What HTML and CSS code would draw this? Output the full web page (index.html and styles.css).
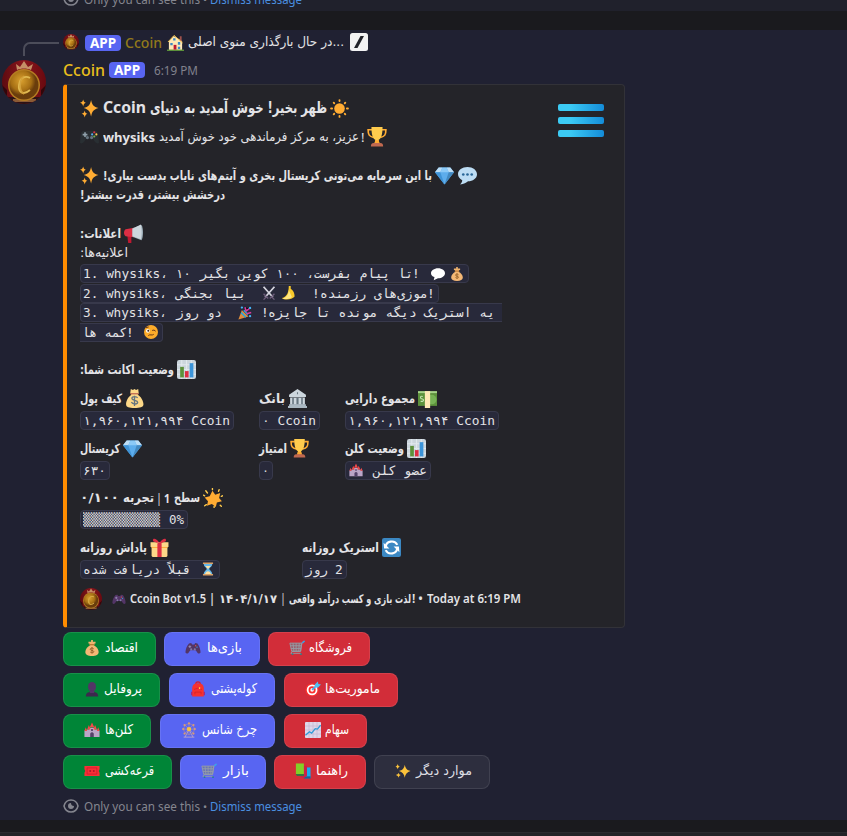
FILE: index.html
```html
<!DOCTYPE html>
<html lang="fa" dir="ltr">
<head>
<meta charset="utf-8">
<title>Ccoin</title>
<link rel="stylesheet" href="styles.css">
</head>
<body>
<svg class="defs" width="0" height="0">
<defs>
<linearGradient id="bar" x1="0" y1="0" x2="1" y2="0"><stop offset=".25" stop-color="#3ccbf4"/><stop offset="1" stop-color="#148cd8"/></linearGradient>
<radialGradient id="gold" cx=".4" cy=".35"><stop offset="0" stop-color="#d9a02e"/><stop offset=".7" stop-color="#a66f14"/><stop offset="1" stop-color="#6a3d0c"/></radialGradient>
<linearGradient id="red" x1="0" y1="0" x2="1" y2="0"><stop offset="0" stop-color="#5d0b10"/><stop offset=".5" stop-color="#8a161d"/><stop offset="1" stop-color="#69090f"/></linearGradient>
<clipPath id="round"><circle cx="22" cy="22" r="22"/></clipPath>
</defs>
<symbol id="coin" viewBox="0 0 44 44"><g clip-path="url(#round)"><path fill="url(#red)" d="M0 0h44v44H0z"/><path fill="#30070b" d="M0 25l5 5v8H0zM44 25l-5 5v8h5z"/><path fill="#2a1215" d="M4 37h36v7H4z"/><path fill="#8a5a35" d="M11 39h23v3H11z"/><circle cx="22" cy="25" r="16" fill="#b57d22"/><circle cx="22" cy="25" r="14.500" fill="url(#gold)"/><path d="M28 18c-5-3-10 0-11 7s4 11 11 5" fill="none" stroke="#e0b850" stroke-width="1.800"/><path d="M22 16c-5 4-5 15 0 18" fill="none" stroke="#d3a03a" stroke-width="1.500"/><path fill="#c58f66" d="M15 10l-1-6 4 3 4-6 4 6 5-3-2 6c-4-2-10-2-14 0z"/></g></symbol>
<symbol id="sparkles" viewBox="0 0 36 36"><path fill="#FFAC33" d="M35 17c-9-2-12-5-14-15-2 10-5 13-14 15 9 3 12 6 14 16 2-10 5-13 14-16zM14 28c-4-1-4-2-5-6-1 4-2 5-6 6 4 1 5 3 6 7 1-4 2-6 5-7zM11 7C8 6 7 5 6 1 5 5 4 6 0 7c4 1 5 3 6 7 1-4 2-6 5-7z"/></symbol>
<symbol id="sparkles2" viewBox="0 0 36 36"><path fill="#fcc33b" d="M35 18c-8-2-11-5-13-14-2 9-5 12-13 14 8 3 11 6 13 15 2-9 5-12 13-15zM13 27c-4-1-4-2-5-5-1 3-2 4-6 5 4 1 5 3 6 6 1-3 2-5 5-6zM11 8C8 7 7 6 6 2 5 6 4 7 1 8c3 1 4 3 5 6 1-3 2-5 5-6z"/></symbol>
<symbol id="sun" viewBox="0 0 36 36"><circle cx="18" cy="18" r="10" fill="#FFAC33"/><path stroke="#FFAC33" stroke-width="3.500" stroke-linecap="round" d="M18 2v2M18 32v2M2 18h2M32 18h2M7 7l1 1M28 28l1 1M7 29l1-1M28 8l1-1"/></symbol>
<symbol id="shine" viewBox="0 0 36 36"><path fill="#FFAC33" d="M17 5l5 7 9-3-2 9 5 6-9 2-2 8-7-5-9 3 2-8-6-7 9-2z"/><path stroke="#FFCC4D" stroke-width="2.500" stroke-linecap="round" d="M17 1v2M20 33v2M1 13l2 1M33 15l2-1M5 5l3 4M29 3l-1 3M3 32l3-2M31 31l2 2"/></symbol>
<symbol id="pad" viewBox="0 0 36 36"><path fill="#292F33" d="M10 7h16c7 0 8 3 9 9l1 14c-2 2-5 1-7-1l-4-6H11l-4 6c-2 2-5 3-7 1l1-14c1-6 2-9 9-9z"/><path fill="#8fa0aa" d="M8 10h3v3h3v3h-3v3H8v-3H5v-3h3z"/><circle cx="27" cy="10" r="2" fill="#dd2e44"/><circle cx="31" cy="14" r="2" fill="#ffcc4d"/><circle cx="23" cy="14" r="2" fill="#55acee"/><circle cx="27" cy="18" r="2" fill="#77b255"/><circle cx="14" cy="20" r="3" fill="#66757f"/><circle cx="22" cy="20" r="3" fill="#66757f"/></symbol>
<symbol id="gamepad" viewBox="0 0 36 36"><path fill="#533566" d="M9 8l5-1 2 3h5l2-3 5 1c4 5 7 14 7 20-2 4-6 3-8-1l-3-4H12l-3 4c-2 4-6 5-8 1 0-6 3-15 8-20z"/><path stroke="#9b93bd" stroke-width="2" d="M8 15h6M11 12v6"/><circle cx="24" cy="13" r="1.500" fill="#e9554b"/><circle cx="27" cy="16" r="1.500" fill="#38b1ea"/><circle cx="14" cy="21" r="2.500" fill="#8178a4"/><circle cx="22" cy="21" r="2.500" fill="#8178a4"/></symbol>
<symbol id="trophy" viewBox="0 0 36 36"><path fill="none" stroke="#FFAC33" stroke-width="3" d="M9 5H2c0 9 2 12 10 14M27 5h7c0 9-2 12-10 14"/><path fill="#FFCC4D" d="M8 0h20c0 12-2 21-7 23l1 6h-8l1-6C10 21 8 12 8 0z"/><path fill="#FFAC33" d="M15 24h6l2 6H13z"/><path fill="#C1694F" d="M12 29h12c4 0 5 3 5 6H7c0-3 1-6 5-6z"/></symbol>
<symbol id="diamond" viewBox="0 0 36 36"><path fill="#5DADEC" d="M7 3h22l7 9-18 23L0 12z"/><path fill="#BDDDF4" d="M7 3h7l-4 9H0zM29 3h-7l4 9h10z"/><path fill="#8CCAF7" d="M14 3h8l4 9H10z"/><path fill="#4289C1" d="M18 35l8-23h10z"/><path fill="#3f93d6" d="M18 35L10 12H0z"/></symbol>
<symbol id="speech" viewBox="0 0 36 36"><path fill="#BDDDF4" d="M18 2c10 0 18 6 18 14 0 7-8 13-17 13-3 3-8 5-15 6 3-3 4-6 4-8-5-3-8-7-8-12C0 8 8 2 18 2z"/><g fill="#2A6797"><circle cx="10" cy="16" r="2.500"/><circle cx="18" cy="16" r="2.500"/><circle cx="26" cy="16" r="2.500"/></g></symbol>
<symbol id="bubble" viewBox="0 0 36 36"><path fill="#fff" d="M18 3c11 0 18 6 18 13s-8 13-18 13l-11 5 2-8C3 24 0 20 0 16 0 9 8 3 18 3z"/></symbol>
<symbol id="mega" viewBox="0 0 36 36"><path fill="#be1931" d="M6 20h8v16H8z"/><path fill="#DD2E44" d="M3 10l16-3v18L3 23c-4-3-4-10 0-13z"/><path fill="#99AAB5" d="M16 8L33 2c4 4 4 24 0 29l-17-7z"/><path fill="#CCD6DD" d="M16 9L32 1c2 8 2 21 0 28l-16-6z"/></symbol>
<symbol id="bag" viewBox="0 0 36 36"><path fill="#FDD888" d="M11 0l4 2 3-2 3 2 4-2 1 8-2 3c6 3 11 12 11 18 0 6-7 7-17 7S2 35 2 29c0-6 4-14 10-18l-2-4z"/><path stroke="#BF6952" stroke-width="2.500" d="M10 9h16"/><path d="M24 17c-3-4-11-3-11 1s11 3 11 7-9 5-12 0M18 13v19" fill="none" stroke="#67757F" stroke-width="2.500"/></symbol>
<symbol id="bag2" viewBox="0 0 36 36"><path fill="#f3b775" d="M12 7h12l-2 5c6 3 11 9 11 15 0 6-6 9-15 9S3 33 3 27c0-6 5-12 11-15z"/><path fill="#c07b35" d="M12 9h12v3H12z"/><path fill="#f0b46e" d="M16 0h4v6h-4zM10 4h16v4H10z"/><path d="M22 20c-3-3-8-2-8 1s8 2 8 5-5 4-8 1M18 16v14" fill="none" stroke="#8d5923" stroke-width="2"/></symbol>
<symbol id="swords" viewBox="0 0 36 36"><path d="M4 2l24 27M32 2L8 29" stroke="#d6d6df" stroke-width="4.500"/><path d="M4 20l12 12M32 20L20 32M4 35l7-7M32 35l-7-7" stroke="#6d5c7a" stroke-width="3.500"/></symbol>
<symbol id="banana" viewBox="0 0 36 36"><path fill="#f9c92b" d="M20 0h5v7c7 4 10 12 10 20-6 8-25 11-33 4 10-2 18-10 18-31z"/><path fill="#ffe682" d="M20 10l8 18c-6 5-16 7-24 4 10-3 16-10 16-22z"/></symbol>
<symbol id="party" viewBox="0 0 36 36"><path fill="#dd8b3b" d="M10 10l17 17L1 35z"/><path stroke="#29a5df" stroke-width="4" d="M8 17l12 12M15 11l10 11"/><path stroke="#d83ba0" stroke-width="4" d="M18 3l3 10 8-6M22 20l12-3"/><g fill="#44b4f5"><circle cx="10" cy="4" r="3"/><circle cx="31" cy="26" r="3"/><circle cx="31" cy="5" r="3"/></g></symbol>
<symbol id="wink" viewBox="0 0 36 36"><circle cx="18" cy="18" r="18" fill="#fbab2a"/><circle cx="10" cy="15" r="5" fill="#fff"/><circle cx="11" cy="15" r="2.500" fill="#442a1c"/><path d="M21 14q5-3 9 2M5 7l7-2M11 27c5-4 9 1 14-3" fill="none" stroke="#633318" stroke-width="2.500"/></symbol>
<symbol id="chart" viewBox="0 0 36 36"><rect width="36" height="36" rx="4" fill="#CCD6DD"/><path d="M0 9h36M0 18h36M0 27h36M9 0v36M18 0v36M27 0v36" stroke="#E1E8ED" stroke-width="2"/><path fill="#5C913B" d="M6 13h7v20H6z"/><path fill="#DD2E44" d="M15 21h7v12h-7z"/><path fill="#3B94D9" d="M24 6h7v27h-7z"/></symbol>
<symbol id="bank" viewBox="0 0 36 36"><path fill="#CCD6DD" d="M18 0l16 11v4H2v-4zM4 16h28v14H4z"/><path fill="#66757F" d="M8 16h3v14H8zM16 16h4v14h-4zM25 16h3v14h-3zM17 6h2v4h-2z"/><path fill="#aab8c2" d="M2 29h32v3H2zM0 32h36v4H0z"/></symbol>
<symbol id="cash" viewBox="0 0 36 36"><path fill="#A6D388" d="M0 4h36v5H0z"/><path fill="#5C913B" d="M0 8h36v24H0z"/><circle cx="26" cy="20" r="9" fill="#77B255"/><path fill="#FFE8B6" d="M13 4h10v32H13z"/><path d="M9 14c-6-2-5 5-1 5s3 6-3 4" fill="none" stroke="#c6e5b3" stroke-width="2"/></symbol>
<symbol id="castle" viewBox="0 0 36 36"><path fill="#bba5c8" d="M1 19h5v-2h6v-4h12v4h6v2h5v15H1z"/><path fill="#f54848" d="M1 20l3-8 3 8zM29 20l3-8 3 8zM7 17l4-10 4 10zM21 17l4-10 4 10zM13 12l5-11 5 11z"/><path fill="#55436b" d="M14 34V26q4-6 8 0v8zM16 16h4v4h-4z"/></symbol>
<symbol id="gift" viewBox="0 0 36 36"><path fill="#FDD888" d="M3 15h30v18q0 3-3 3H6q-3 0-3-3z"/><path fill="#FCAB40" d="M3 15h30v4H3z"/><path fill="#FDD888" d="M1 8h34v9H1z"/><path fill="#DD2E44" d="M14 8h8v28h-8zM17 8C12 0 4-1 6 6l9 4zM19 8c5-8 13-9 11-2l-9 4z"/></symbol>
<symbol id="refresh" viewBox="0 0 36 36"><rect width="36" height="36" rx="4" fill="#3B88C3"/><path d="M7 18c0-13 17-15 22-5M29 18c0 13-17 15-22 5" fill="none" stroke="#fff" stroke-width="4"/><path fill="#fff" d="M3 9l1 11h10zM33 27l-1-11H22z"/></symbol>
<symbol id="hour" viewBox="0 0 36 36"><path fill="#66b9ed" d="M7 4h22c0 8-6 10-8 14 2 4 8 6 8 14H7c0-8 6-10 8-14C13 14 7 12 7 4z"/><path fill="#ffe0a2" d="M11 10h14l-7 8zM10 32c1-6 6-7 8-8 3 1 7 2 8 8z"/><path fill="#d9a066" d="M5 1h26v4H5zM5 31h26v4H5z"/></symbol>
<symbol id="house" viewBox="0 0 36 36"><path fill="#FFE8B6" d="M4 16L14 4l18 11v19H4z"/><path fill="#A0524c" d="M27 5h4v12l-4-4z"/><path d="M2 17L15 3l18 16" fill="none" stroke="#FFCC4D" stroke-width="2"/><path fill="#5C913B" d="M0 33h36v3H0z"/><path fill="#3B88C3" d="M7 19h5v5H7zM23 17h5v6h-5zM13 9h5v5h-5zM23 27h5v5h-5z"/><path fill="#BE1931" d="M14 23h6v10h-6z"/></symbol>
<symbol id="slash" viewBox="0 0 36 36"><rect width="36" height="36" rx="5" fill="#f2f2f3"/><path fill="#212229" d="M21 6h7L15 30H8z"/></symbol>
<symbol id="person" viewBox="0 0 36 36"><ellipse cx="18" cy="13" rx="9" ry="11" fill="#533566"/><path fill="#3c294d" d="M4 35q0-9 9-10h10q9 1 9 10z"/><path fill="#533566" d="M13 22h10v5H13z"/></symbol>
<symbol id="backpack" viewBox="0 0 36 36"><path d="M13 7q0-5 5-5t5 5" fill="none" stroke="#d61f2c" stroke-width="3"/><path fill="#f8312f" d="M5 35V15Q6 5 18 5t13 10v20z"/><path fill="#ca0b4a" d="M3 24h2v8H3zM31 24h2v8h-2z"/><path d="M9 19q9-6 18 0M11 30v-5h14v5" fill="none" stroke="#c9202a" stroke-width="1.500"/><path fill="#ffc83d" d="M20 14h3v4h-3z"/></symbol>
<symbol id="wheel" viewBox="0 0 36 36"><path d="M18 17L9 34M18 17l9 17M6 34h24" stroke="#bda7c9" stroke-width="2"/><circle cx="18" cy="16" r="12" fill="none" stroke="#9b83ad" stroke-width="2"/><path d="M18 2v28M4 16h28M8 6l20 20M28 6L8 26" stroke="#a992b5" stroke-width="1.500"/><g fill="#d99a78"><circle cx="18" cy="3" r="2.500"/><circle cx="5" cy="16" r="2.500"/><circle cx="31" cy="16" r="2.500"/><circle cx="8" cy="7" r="2.500"/><circle cx="28" cy="7" r="2.500"/><circle cx="8" cy="26" r="2.500"/><circle cx="28" cy="26" r="2.500"/></g><circle cx="18" cy="16" r="5" fill="#f7c13c"/></symbol>
<symbol id="ticket" viewBox="0 0 36 36"><path fill="#f82f36" d="M1 7h34v7q-4 4 0 8v7H1v-7q4-4 0-8z"/><path d="M7 11h22v14H7z" fill="none" stroke="#c3162d" stroke-width="1.500"/><path stroke="#9d1027" stroke-width="2" d="M12 18h4M14 16v4M20 18h4M22 16v4"/></symbol>
<symbol id="cart" viewBox="0 0 36 36"><path fill="#777f88" opacity=".6" d="M2 7h27l-3 18H6z"/><path d="M34 2l-5 4-3 20H6M2 7h27l-3 18H6zM3 13h24M4 19h23M9 7l2 18M16 7v18M23 7l-1 18M7 26l-3 4h23" fill="none" stroke="#969da7" stroke-width="2"/><g fill="#26818c"><circle cx="8" cy="32" r="2"/><circle cx="27" cy="32" r="2"/></g><path d="M30 7l5-5" stroke="#30a7ef" stroke-width="3"/></symbol>
<symbol id="target" viewBox="0 0 36 36"><circle cx="16" cy="20" r="15" fill="#f8312f"/><circle cx="16" cy="20" r="12" fill="#fff"/><circle cx="16" cy="20" r="8" fill="#f8312f"/><circle cx="16" cy="20" r="4" fill="#fff"/><path stroke="#46a9e8" stroke-width="4" d="M16 20L29 7"/><path fill="#4fc1f2" d="M22 8l7-7 1 6 6 1-7 7-6-1z"/></symbol>
<symbol id="stock" viewBox="0 0 36 36"><rect width="36" height="36" rx="2" fill="#ded7ea"/><path d="M9 0v36M18 0v36M27 0v36M0 9h36M0 18h36M0 27h36" stroke="#c2b6d2" stroke-width="1.500"/><path d="M1 30l9-8 5 3 8-10 5 1 7-9" fill="none" stroke="#2f9bd9" stroke-width="3"/></symbol>
<symbol id="books" viewBox="0 0 36 36"><path fill="#16aaf0" d="M20 10h15v24H20z"/><path fill="#176295" d="M20 30h15v5H20z"/><path fill="#ca2048" d="M12 7h15v22l-7 5-8-3z"/><path fill="#83cf27" d="M2 1h18v24H2z"/><path fill="#327640" d="M2 25h18v4H5q-3 0-3-4z"/></symbol>
<symbol id="eye" viewBox="0 0 16 14"><path d="M1 7c2-8 12-8 14 0-2 8-12 8-14 0z" fill="none" stroke="#85868f" stroke-width="1.500"/><path fill="#85868f" d="M8 4q0 3 3 3a3 3 0 1 1-3-3z"/></symbol>
</svg>

<div class="previous"><div class="notice"><svg><use href="#eye"/></svg><span class="fit" data-w="116"><bdi>Only you can see this</bdi></span><span>•</span><a class="fit" data-w="92"><bdi>Dismiss message</bdi></a></div></div>

<main class="message">
  <div class="reply">
    <span class="spine"></span>
    <svg class="mini"><use href="#coin"/></svg><span class="app">APP</span>
    <span class="fit quiet" data-w="37"><bdi>Ccoin</bdi></span>
    <svg class="house"><use href="#house"/></svg>
    <span class="fit fa" data-w="156"><bdi dir="rtl"><span dir="ltr">...</span>در حال بارگذاری منوی اصلی</bdi></span>
    <svg class="slash"><use href="#slash"/></svg>
  </div>
  <div class="content">
    <svg class="avatar"><use href="#coin"/></svg>
    <div class="body">
      <div class="author"><span class="fit name" data-w="42"><bdi>Ccoin</bdi></span><span class="app">APP</span><span class="fit time" data-w="44"><bdi>6:19 PM</bdi></span></div>
      <article class="embed">
        <div class="top">
          <div>
            <h1 class="line"><svg><use href="#sparkles"/></svg><span class="fit" data-w="43"><bdi>Ccoin</bdi></span><span class="fit fa" data-w="177"><bdi dir="rtl">ظهر بخیر! خوش آمدید به دنیای</bdi></span><svg class="sun"><use href="#sun"/></svg></h1>
            <div class="line"><svg><use href="#pad"/></svg><b class="fit" data-w="52"><bdi>whysiks</bdi></b><span class="fit fa" data-w="200"><bdi dir="rtl">عزیز، به مرکز فرماندهی خود خوش آمدید</bdi></span><span class="bang">!</span><svg class="big"><use href="#trophy"/></svg></div>
            <div class="line"></div>
            <div class="line strong"><svg><use href="#sparkles"/></svg><span class="fit fa" data-w="329"><bdi dir="rtl">با این سرمایه می‌تونی کریستال بخری و آیتم‌های نایاب بدست بیاری!</bdi></span><svg><use href="#diamond"/></svg><svg><use href="#speech"/></svg></div>
            <div class="line strong"><span class="fit fa" data-w="145"><bdi dir="rtl">درخشش بیشتر، قدرت بیشتر!</bdi></span></div>
            <div class="line"></div>
            <div class="line strong"><span class="fit fa" data-w="41"><bdi dir="rtl">اعلانات:</bdi></span><svg><use href="#mega"/></svg></div>
            <div class="line"><span class="fit fa" data-w="48"><bdi dir="rtl">اعلانیه‌ها:</bdi></span></div>
            <div class="line"><code class="w389"><span class="fit" data-w="108"><bdi>1. whysiks، ۱۰</bdi></span><span class="fit ar" data-w="213"><bdi dir="rtl">تا پیام بفرست، ۱۰۰ کوین بگیر</bdi></span><i>!</i><svg class="s1"><use href="#bubble"/></svg><svg class="s2"><use href="#bag2"/></svg></code></div>
            <div class="line"><code class="w359"><span class="fit" data-w="84"><bdi>2. whysiks،</bdi></span><span class="fit ar" data-w="70"><bdi dir="rtl">بیا بجنگی</bdi></span><svg class="s3"><use href="#swords"/></svg><svg class="s2"><use href="#banana"/></svg><i class="s4">!</i><span class="fit" data-w="108"><bdi dir="rtl">موزی‌های رزمنده</bdi></span><i>!</i></code></div>
            <div class="line"><code class="w422"><span class="fit" data-w="84"><bdi>3. whysiks،</bdi></span><span class="fit ar" data-w="46"><bdi dir="rtl">دو روز</bdi></span><svg class="s3"><use href="#party"/></svg><i class="s5">!</i><span class="fit" data-w="227"><bdi dir="rtl">یه استریک دیگه مونده تا جایزه</bdi></span></code></div>
            <div class="line"><code class="w83"><span class="fit" data-w="45"><bdi dir="rtl">کمه ها</bdi></span><i>!</i><svg class="s6"><use href="#wink"/></svg></code></div>
            <div class="line"></div>
            <div class="line strong"><span class="fit fa" data-w="94"><bdi dir="rtl">وضعیت اکانت شما:</bdi></span><svg><use href="#chart"/></svg></div>
          </div>
          <svg class="menu" viewBox="0 0 46 34"><g fill="url(#bar)"><rect width="46" height="7" rx="2"/><rect y="13" width="46" height="7" rx="2"/><rect y="26" width="46" height="7" rx="2"/></g></svg>
        </div>
        <div class="fields three">
          <section><div class="line strong"><span class="fit fa" data-w="42"><bdi dir="rtl">کیف پول</bdi></span><svg><use href="#bag"/></svg></div><code><span class="fit" data-w="147"><bdi>۱,۹۶۰,۱۲۱,۹۹۴ Ccoin</bdi></span></code></section>
          <section><div class="line strong"><span class="fit fa" data-w="26"><bdi dir="rtl">بانک</bdi></span><svg><use href="#bank"/></svg></div><code><span class="fit" data-w="54"><bdi>۰ Ccoin</bdi></span></code></section>
          <section><div class="line strong"><span class="fit fa" data-w="70"><bdi dir="rtl">مجموع دارایی</bdi></span><svg><use href="#cash"/></svg></div><code><span class="fit" data-w="147"><bdi>۱,۹۶۰,۱۲۱,۹۹۴ Ccoin</bdi></span></code></section>
          <section><div class="line strong"><span class="fit fa" data-w="40"><bdi dir="rtl">کریستال</bdi></span><svg><use href="#diamond"/></svg></div><code><span class="fit" data-w="23"><bdi>۶۳۰</bdi></span></code></section>
          <section><div class="line strong"><span class="fit fa" data-w="28"><bdi dir="rtl">امتیاز</bdi></span><svg><use href="#trophy"/></svg></div><code><span class="fit" data-w="7"><bdi>۰</bdi></span></code></section>
          <section><div class="line strong"><span class="fit fa" data-w="59"><bdi dir="rtl">وضعیت کلن</bdi></span><svg><use href="#chart"/></svg></div><code class="clan"><svg><use href="#castle"/></svg><span class="fit" data-w="54"><bdi dir="rtl">عضو کلن</bdi></span></code></section>
        </div>
        <div class="fields one">
          <section><div class="line strong"><span class="fit fa" data-w="39"><bdi>۰/۱۰۰</bdi></span><span class="fit fa" data-w="31"><bdi dir="rtl">تجربه</bdi></span><span class="fit pipe" data-w="4"><bdi>|</bdi></span><span class="fit level" data-w="6"><bdi>1</bdi></span><span class="fit fa" data-w="26"><bdi dir="rtl">سطح</bdi></span><svg class="big"><use href="#shine"/></svg></div><code><span class="fit" data-w="77"><bdi>▒▒▒▒▒▒▒▒▒▒</bdi></span><span class="fit pct" data-w="15"><bdi>0%</bdi></span></code></section>
        </div>
        <div class="fields two">
          <section><div class="line strong"><span class="fit fa" data-w="67"><bdi dir="rtl">پاداش روزانه</bdi></span><svg><use href="#gift"/></svg></div><code class="claimed"><span class="fit" data-w="108"><bdi dir="rtl">قبلاً دریافت شده</bdi></span><svg><use href="#hour"/></svg></code></section>
          <section><div class="line strong"><span class="fit fa" data-w="77"><bdi dir="rtl">استریک روزانه</bdi></span><svg><use href="#refresh"/></svg></div><code><span class="fit" data-w="23"><bdi dir="rtl">روز</bdi></span><span class="two-days">2</span></code></section>
        </div>
        <footer><svg class="seal"><use href="#coin"/></svg><svg class="fpad"><use href="#gamepad"/></svg><span class="fit" data-w="85"><bdi>Ccoin Bot v1.5 |</bdi></span><span class="fit fa" data-w="58"><bdi>۱۴۰۴/۱/۱۷</bdi></span><span class="fit" data-w="4"><bdi>|</bdi></span><span class="fit fa" data-w="122"><bdi dir="rtl">لذت بازی و کسب درآمد واقعی</bdi></span><span class="fbang">!</span><span>•</span><span class="fit" data-w="94"><bdi>Today at 6:19 PM</bdi></span></footer>
      </article>
      <nav>
        <div class="row r1"><button class="green"><svg><use href="#bag2"/></svg><span class="fit" data-w="33"><bdi dir="rtl">اقتصاد</bdi></span></button><button class="blue"><svg><use href="#gamepad"/></svg><span class="fit" data-w="35"><bdi dir="rtl">بازی‌ها</bdi></span></button><button class="red"><svg><use href="#cart"/></svg><span class="fit" data-w="43"><bdi dir="rtl">فروشگاه</bdi></span></button></div>
        <div class="row r2"><button class="green"><svg><use href="#person"/></svg><span class="fit" data-w="38"><bdi dir="rtl">پروفایل</bdi></span></button><button class="blue"><svg><use href="#backpack"/></svg><span class="fit" data-w="46"><bdi dir="rtl">کوله‌پشتی</bdi></span></button><button class="red"><svg><use href="#target"/></svg><span class="fit" data-w="55"><bdi dir="rtl">ماموریت‌ها</bdi></span></button></div>
        <div class="row r3"><button class="green"><svg><use href="#castle"/></svg><span class="fit" data-w="28"><bdi dir="rtl">کلن‌ها</bdi></span></button><button class="blue"><svg><use href="#wheel"/></svg><span class="fit" data-w="55"><bdi dir="rtl">چرخ شانس</bdi></span></button><button class="red"><svg><use href="#stock"/></svg><span class="fit" data-w="24"><bdi dir="rtl">سهام</bdi></span></button></div>
        <div class="row r4"><button class="green"><svg><use href="#ticket"/></svg><span class="fit" data-w="49"><bdi dir="rtl">قرعه‌کشی</bdi></span></button><button class="blue"><svg><use href="#cart"/></svg><span class="fit" data-w="26"><bdi dir="rtl">بازار</bdi></span></button><button class="red"><svg><use href="#books"/></svg><span class="fit" data-w="32"><bdi dir="rtl">راهنما</bdi></span></button><button class="gray"><svg><use href="#sparkles2"/></svg><span class="fit" data-w="56"><bdi dir="rtl">موارد دیگر</bdi></span></button></div>
      </nav>
      <div class="notice"><svg><use href="#eye"/></svg><span class="fit" data-w="116"><bdi>Only you can see this</bdi></span><span>•</span><a class="fit" data-w="92"><bdi>Dismiss message</bdi></a></div>
    </div>
  </div>
</main>
<div class="composer"></div>
<script src="fit.js"></script>
</body>
</html>
```
FILE: styles.css
```css
* { box-sizing: border-box; }
body { margin: 0; height: 836px; overflow: hidden; background: #1a1a1e; color: #e3e3e6; font: 13px "Noto Sans", "DejaVu Sans", sans-serif; }
.defs { position: absolute; }
svg { flex: none; display: block; }
.fit { flex: none; display: block; white-space: nowrap; }
.fit bdi { display: inline-block; transform-origin: 0 50%; }
.fa { font-family: "DejaVu Sans", sans-serif; }
.previous { height: 11px; background: #20212c; overflow: hidden; padding-left: 63px; }
.previous .notice { margin-top: -9px; }
.notice { height: 16px; display: flex; align-items: center; gap: 4px; color: #85868f; font-size: 12px; }
.notice svg { width: 16px; height: 14px; margin-right: 1px; }
.notice span + span { margin: 0 -1px; font-size: 11px; }
.notice a { color: #4a8fe0; }
.message { margin-top: 19px; height: 790px; background: #202132; padding-top: 3px; }
.reply { height: 18px; padding-left: 23px; display: flex; align-items: center; }
.spine { width: 36px; height: 14px; margin: 14px 4px 0 0; border: solid #4c4d5a; border-width: 2px 0 0 2px; border-radius: 7px 0 0; }
.mini { width: 16px; height: 16px; margin-right: 6px; }
.app { width: 36px; height: 16px; border-radius: 4px; background: #5865f2; color: #fff; font-weight: 700; font-size: 13.500px; line-height: 16px; text-align: center; }
.reply .app { margin-top: 2px; }
.quiet { margin: 0 5px 0 4px; color: #92791b; font-weight: 500; font-size: 14px; }
.house { width: 17px; height: 17px; margin-right: 4px; }
.reply .fa { font-size: 13px; margin-top: -2px; }
.slash { width: 18px; height: 18px; margin-left: 6px; }
.content { display: flex; padding-left: 2px; margin-top: 9px; }
.avatar { width: 44px; height: 44px; }
.body { margin-left: 17px; }
.author { height: 20px; display: flex; align-items: center; }
.name { color: #e8bd1c; font-size: 16px; font-weight: 500; margin-right: 4px; }
.time { color: #81828d; margin-left: 9px; font-size: 12px; padding-top: 1px; }
.embed { width: 562px; height: 544px; margin-top: 4px; border: 1px solid #323238; border-left: 4px solid #ff8c00; border-radius: 4px; background: #242429; padding: 12px 0 0 13px; }
.top { display: flex; }
.top > div { width: 478px; }
.menu { width: 46px; height: 34px; margin-top: 7px; }
.line { height: 19.45px; margin: 0; display: flex; align-items: center; gap: 4px; }
.line svg { width: 19px; height: 19px; }
.line > .fa + svg { margin-left: -1px; }
.line > .fa { margin-top: -1px; }
.line .big { width: 20px; height: 20px; }
.line .bang + .big { margin-left: -2px; }
h1.line { height: 22px; margin-bottom: 8px; font-size: 16px; font-weight: 700; }
h1 .fit:not(.fa) { margin-top: -2px; }
.strong { font-weight: 700; }
.bang { width: 4px; margin-left: -2px; }
code { width: fit-content; height: 19px; border: 1px solid #38394b; border-radius: 4px; background: #28293a; padding: 0 3px 0 2px; display: flex; align-items: center; font: 12.8px "DejaVu Sans Mono", monospace; }
.line code { margin-top: 2px; }
code i { font-style: normal; width: 5px; margin-left: -1px; }
.line code svg { width: 14px; height: 14px; }
.w389 { width: 389px; }
.w359 { width: 359px; }
.w422 { width: 422px; border-right: 0; border-radius: 4px 0 0 4px; }
.w83 { width: 83px; border-left: 0; border-radius: 0 4px 4px 0; padding-left: 2px; }
.ar { margin-left: 9px; }
code .s1 { margin-left: 14px; }
code .s2 { margin-left: 5px; }
code .s3 { margin-left: 16px; }
code .s4 { margin: 0 3px 0 17px; }
code .s5 { margin: 0 2px 0 9px; }
code .s6 { margin-left: 13px; }
.fields { display: grid; }
.three { grid-template-columns: 178.500px 86.500px 1fr; row-gap: 8px; margin-top: 8px; }
.one { margin-top: 7px; }
.two { grid-template-columns: 222px 1fr; margin-top: 8px; }
section { height: 42px; }
section .line { height: 22px; margin-bottom: 1px; }
section > code svg { width: 14px; height: 14px; }
.pipe, .level { margin-left: -1px; }
.clan svg { margin: 0 10px 0 1px; }
.claimed svg { margin: 0 1px 0 10px; }
.pct { margin-left: 9px; }
.two-days { margin-left: 7px; }
footer { height: 24px; margin-top: 8px; display: flex; align-items: center; gap: 4px; font-size: 12px; font-weight: 600; }
.seal { width: 22px; height: 22px; }
.fpad { width: 14px; height: 14px; margin-left: 6px; }
.fbang { margin: 0 -1px 0 -3px; }
nav { display: grid; gap: 7px; margin-top: 4px; }
.row { display: grid; gap: 8px; }
.r1 { grid-template-columns: 93px 96px 102px; }
.r2 { grid-template-columns: 97px 106px 114px; column-gap: 9px; }
.r3 { grid-template-columns: 88px 115px 83px; column-gap: 9px; }
.r4 { grid-template-columns: 109px 86px 92px 116px; }
button { height: 34px; border: 1px solid #ffffff18; border-radius: 8px; padding: 0 17px 2px 20px; display: flex; align-items: center; justify-content: space-between; color: #fff; font: 500 13.500px "DejaVu Sans", sans-serif; }
button .fit { margin-top: -2px; }
button svg { width: 16px; height: 16px; }
.green { background: #008537; }
.blue { background: #5865f2; }
.red { background: #d22d39; }
.gray { background: #2d2e3e; color: #dedee4; }
nav + .notice { margin-top: 9px; }
.composer { margin-top: 12px; height: 4px; border-top: 1px solid #2a2a2f; background: #222327; }
```
FILE: fit.js
```js
// Scales each label horizontally to the width of its slot.
for (const slot of document.querySelectorAll('.fit')) {
  const width = Number(slot.dataset.w);
  const label = slot.firstElementChild;
  const natural = label.getBoundingClientRect().width;
  slot.style.width = width + 'px';
  label.style.transform = 'scaleX(' + width / natural + ')';
}
```
